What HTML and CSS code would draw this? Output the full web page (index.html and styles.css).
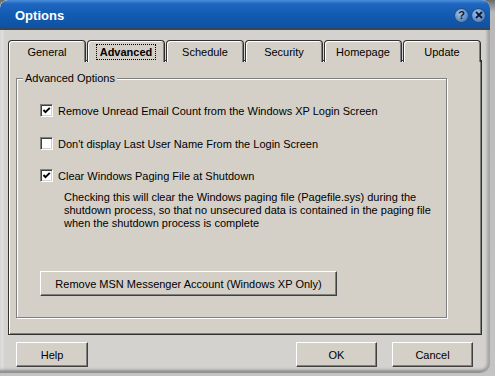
FILE: index.html
```html
<!DOCTYPE html>
<html lang="en">
  <head>
    <meta charset="UTF-8" />
    <title>Options</title>
    <link rel="stylesheet" href="styles.css">
  </head>
  <body>
    <div class="window">
      <div class="titlebar">
        <span class="title">Options</span>
        <div class="title-buttons">
          <span class="tbtn">?</span>
          <span class="tbtn">
            <svg width="8" height="8" viewBox="0 0 8 8"><path d="M1 1 L7 7 M7 1 L1 7" stroke="#0b1a33" stroke-width="1.8"/></svg>
          </span>
        </div>
      </div>

      <div class="client">
        <div class="tabs">
          <div class="tab">General</div>
          <div class="tab active"><span class="focus">Advanced</span></div>
          <div class="tab">Schedule</div>
          <div class="tab">Security</div>
          <div class="tab">Homepage</div>
          <div class="tab">Update</div>
        </div>

        <div class="panel">
          <div class="group">
            <span class="group-label">Advanced Options</span>

            <label class="check">
              <span class="box"><svg width="9" height="9" viewBox="0 0 9 9"><path d="M1.5 4 L3.5 6.2 L7.8 1.8" fill="none" stroke="#000" stroke-width="1.9"/></svg></span>
              Remove Unread Email Count from the Windows XP Login Screen
            </label>
            <label class="check second">
              <span class="box"></span>
              Don't display Last User Name From the Login Screen
            </label>
            <label class="check last">
              <span class="box"><svg width="9" height="9" viewBox="0 0 9 9"><path d="M1.5 4 L3.5 6.2 L7.8 1.8" fill="none" stroke="#000" stroke-width="1.9"/></svg></span>
              Clear Windows Paging File at Shutdown
            </label>

            <p class="note">
              Checking this will clear the Windows paging file (Pagefile.sys) during the
              shutdown process, so that no unsecured data is contained in the paging file
              when the shutdown process is complete
            </p>

            <button class="btn wide">Remove MSN Messenger Account (Windows XP Only)</button>
          </div>
        </div>

        <div class="footer">
          <button class="btn help">Help</button>
          <span class="spacer"></span>
          <button class="btn ok">OK</button>
          <button class="btn cancel">Cancel</button>
        </div>
      </div>
    </div>
  </body>
</html>
```

FILE: styles.css
```css
body {
  margin: 0;
  width: 495px;
  height: 376px;
  overflow: hidden;
  background: linear-gradient(#6a6a6a 0, #b9b9b9 12px, #c4c4c4 100%);
  font-family: "Liberation Sans", Arial, sans-serif;
  font-size: 11px;
  color: #000;
}
.window {
  width: 490px;
  height: 373px;
  background: #d4d2ce;
  border-radius: 8px 8px 10px 0;
  box-shadow: inset -4px 0 3px -1px #a4a4a4, inset 0 -4px 3px -1px #8c8c8c, inset 4px 0 3px -1px #e2e2e2;
  overflow: hidden;
}
.titlebar {
  height: 28px;
  border-bottom: 2px solid #3a4658;
  background: linear-gradient(#4a8fdc 0, #1e66bf 4px, #135cb2 50%, #0d51a2 100%);
  border-radius: 8px 8px 0 0;
  display: flex;
  align-items: center;
  padding: 0 5px 0 15px;
  color: white;
}
.title {
  font-size: 13px;
  font-weight: bold;
  flex: 1;
  padding-top: 3px;
}
.title-buttons {
  display: flex;
  gap: 4px;
  padding-top: 2px;
}
.tbtn {
  width: 13px;
  height: 13px;
  border-radius: 50%;
  background: radial-gradient(circle at 40% 35%, #a9c6ea 0, #6f9bd3 45%, #3d6cab 100%);
  box-shadow: 0 0 0 1px #2b4e82;
  color: #0b1a33;
  font-weight: bold;
  font-size: 11px;
  display: flex;
  align-items: center;
  justify-content: center;
}
.client {
  padding: 10px 8px 0 8px;
}
.tabs {
  display: grid;
  grid-template-columns: repeat(6, 1fr);
  height: 20px;
}
.tab {
  position: relative;
  margin-right: 1px;
  background: #d4d0c8;
  border: 1px solid #303030;
  border-bottom: none;
  border-radius: 4px 4px 0 0;
  box-shadow: inset 1px 1px 0 #fff, inset -1px 0 0 #808080;
  display: flex;
  align-items: center;
  justify-content: center;
}
.tab.active {
  z-index: 1;
  height: 21px;
  font-weight: bold;
}
.focus {
  outline: 1px dotted #000;
  padding: 1px 3px;
}
.panel {
  background: #d4d0c8;
  border: 1px solid #303030;
  box-shadow: inset 1px 1px 0 #fff, inset -1px -1px 0 #808080;
  padding: 17px 34px 16px 7px;
}
.group {
  position: relative;
  padding: 25px 10px 21px 23px;
  border: 1px solid #808080;
  box-shadow: inset 1px 1px 0 #fff, 1px 1px 0 #fff;
}
.group-label {
  position: absolute;
  top: -7px;
  left: 6px;
  padding: 0 2px;
  line-height: 13px;
  background: #d4d0c8;
}
.check {
  display: flex;
  align-items: center;
  gap: 5px;
  height: 13px;
  margin-bottom: 20px;
}
.check.second {
  margin-bottom: 19px;
}
.check.last {
  margin-bottom: 9px;
}
.box {
  box-sizing: border-box;
  width: 13px;
  height: 13px;
  background: #fff;
  border: 1px solid;
  border-color: #808080 #fff #fff #808080;
  box-shadow: inset 1px 1px 0 #404040, inset -1px -1px 0 #d4d0c8;
  display: flex;
  align-items: center;
  justify-content: center;
}
.note {
  margin: 0 0 41px 24px;
  line-height: 13px;
}
.btn {
  box-sizing: border-box;
  height: 25px;
  padding: 0;
  font-family: "Liberation Sans", Arial, sans-serif;
  font-size: 11px;
  color: #000;
  background: #d4d0c8;
  border: 1px solid;
  border-color: #fff #404040 #404040 #fff;
  box-shadow: inset -1px -1px 0 #808080;
}
.btn.wide {
  width: 297px;
  display: block;
}
.footer {
  display: flex;
  padding: 7px 9px 0 8px;
  gap: 15px;
}
.spacer {
  flex: 1;
}
.btn.help {
  width: 72px;
}
.btn.ok,
.btn.cancel {
  width: 81px;
}
```
